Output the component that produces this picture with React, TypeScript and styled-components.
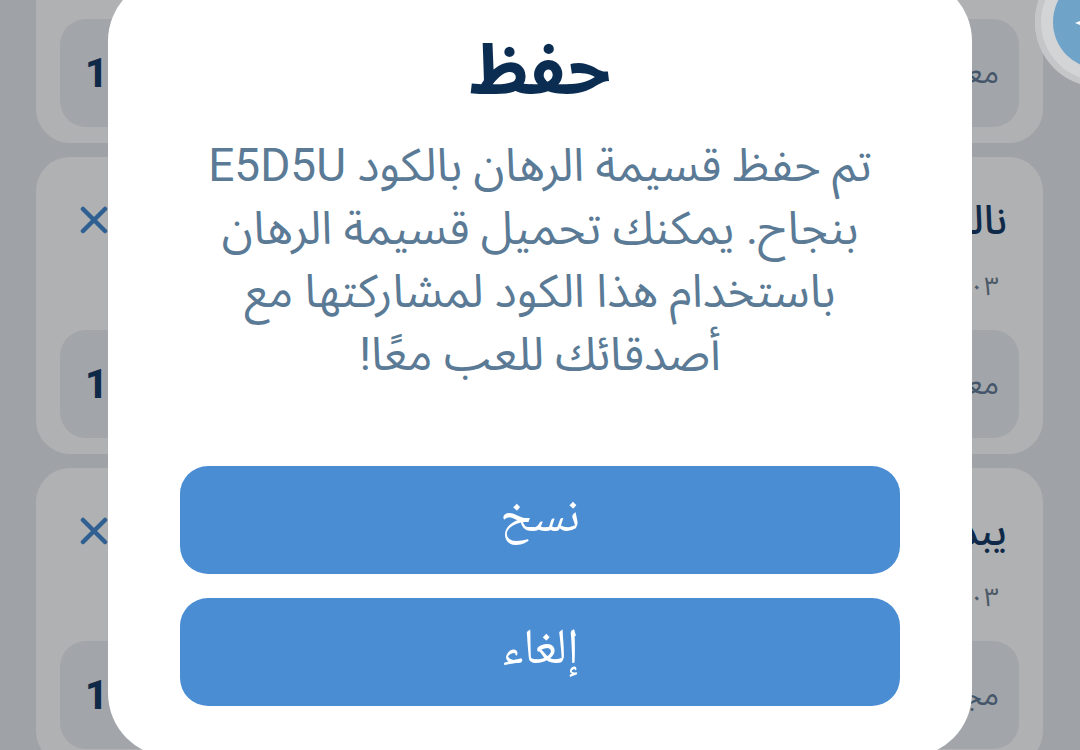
import React from 'react';
import styled, { createGlobalStyle } from 'styled-components';

const GlobalStyle = createGlobalStyle`
  html, body {
    margin: 0;
    padding: 0;
    background: #9fa3a7;
  }
  body {
    font-family: Roboto, 'Noto Sans Arabic', 'DejaVu Sans', sans-serif;
  }
`;

const tickets = [
  { id: 1, title: 'نالت الفوز', date: '٠٣', odds: '1.85', label: 'معامل الربح', showHeader: false },
  { id: 2, title: 'نالت الفوز', date: '٠٣', odds: '1.85', label: 'معامل الربح', showHeader: true },
  { id: 3, title: 'يبدأ قريبا', date: '٠٣', odds: '1.32', label: 'مجموع الربح', showHeader: true },
];

const App = () => {
  return (
    <>
      <GlobalStyle />
      <Screen>
        <List>
          {tickets.map((t) => (
            <Card key={t.id}>
              {t.showHeader ? (
                <CardHeader>
                  <CloseMark viewBox="0 0 28 28" aria-hidden>
                    <path d="M3 3 L25 25 M25 3 L3 25" />
                  </CloseMark>
                  <CardInfo>
                    <CardTitle>{t.title}</CardTitle>
                    <CardDate>{t.date}</CardDate>
                  </CardInfo>
                </CardHeader>
              ) : (
                <Spacer />
              )}
              <OddsBox>
                <Odds>{t.odds}</Odds>
                <OddsLabel>{t.label}</OddsLabel>
              </OddsBox>
            </Card>
          ))}
        </List>

        <Fab>
          <FabInner>
            <svg width="30" height="30" viewBox="0 0 30 30">
              <path d="M4 15 L26 6 L20 15 L26 24 Z" fill="#ffffff" />
            </svg>
          </FabInner>
        </Fab>

        <Modal>
          <Title>حفظ</Title>
          <Message>
            <Line>تم حفظ قسيمة الرهان بالكود E5D5U</Line>
            <Line>بنجاح. يمكنك تحميل قسيمة الرهان</Line>
            <Line>باستخدام هذا الكود لمشاركتها مع</Line>
            <Line>أصدقائك للعب معًا!</Line>
          </Message>
          <Actions>
            <ActionButton>نسخ</ActionButton>
            <ActionButton>إلغاء</ActionButton>
          </Actions>
        </Modal>
      </Screen>
    </>
  );
};

const Screen = styled.div`
  position: relative;
  width: 1080px;
  height: 750px;
  overflow: hidden;
  background: #9fa3a7;
`;

const List = styled.div`
  display: flex;
  flex-direction: column;
  gap: 14px;
  padding: 0 37px 0 36px;
  margin-top: -154px;
`;

const Card = styled.div`
  display: flex;
  flex-direction: column;
  height: 297px;
  box-sizing: border-box;
  padding: 0 24px 16px;
  background: #b0b1b3;
  border-radius: 34px;
`;

const Spacer = styled.div`
  flex: 1;
`;

const CardHeader = styled.div`
  flex: 1;
  display: flex;
  justify-content: space-between;
  align-items: flex-start;
  padding: 44px 12px 0 20px;
`;

const CloseMark = styled.svg`
  width: 28px;
  height: 28px;
  margin-top: 5px;
  path {
    stroke: #305f91;
    stroke-width: 4.5;
    stroke-linecap: round;
    fill: none;
  }
`;

const CardInfo = styled.div`
  direction: rtl;
  display: flex;
  flex-direction: column;
  gap: 18px;
`;

const CardTitle = styled.div`
  font-size: 40px;
  font-weight: 500;
  color: #0f2a48;
  line-height: 40px;
`;

const CardDate = styled.div`
  font-size: 26px;
  color: #4d5a67;
  padding-right: 8px;
`;

const OddsBox = styled.div`
  display: flex;
  justify-content: space-between;
  align-items: center;
  height: 108px;
  padding: 0 20px 0 25px;
  background: #a2a5a9;
  border-radius: 26px;
`;

const Odds = styled.span`
  font-size: 40px;
  font-weight: 800;
  color: #0f2a48;
`;

const OddsLabel = styled.span`
  direction: rtl;
  font-size: 30px;
  color: #45556a;
`;

const Fab = styled.div`
  position: absolute;
  left: 1035px;
  top: -43px;
  width: 130px;
  height: 130px;
  border-radius: 50%;
  background: #d2d4d6;
  box-shadow: inset 0 0 0 6px #c4c6c8;
  display: flex;
  align-items: center;
  justify-content: center;
`;

const FabInner = styled.div`
  width: 94px;
  height: 94px;
  border-radius: 50%;
  background: #6fa3c8;
  display: flex;
  align-items: center;
  padding-left: 18px;
  box-sizing: border-box;
  svg {
    margin-top: 2px;
  }
`;

const Modal = styled.div`
  position: absolute;
  left: 108px;
  top: -23px;
  width: 864px;
  height: 780px;
  box-sizing: border-box;
  padding: 50px 40px 51px;
  background: #ffffff;
  border-radius: 64px;
  display: flex;
  flex-direction: column;
  align-items: center;
  direction: rtl;
`;

const Title = styled.h2`
  margin: 0;
  font-size: 70px;
  font-weight: 700;
  line-height: 86px;
  color: #0b2d52;
`;

const Message = styled.div`
  margin-top: 22px;
  display: flex;
  flex-direction: column;
  align-items: center;
  gap: 2px;
  color: #5a7a95;
`;

const Line = styled.p`
  margin: 0;
  font-size: 46px;
  line-height: 61px;
  text-align: center;
  white-space: nowrap;
`;

const Actions = styled.div`
  margin-top: auto;
  width: 720px;
  display: flex;
  flex-direction: column;
  gap: 24px;
`;

const ActionButton = styled.button`
  height: 108px;
  width: 100%;
  border: none;
  border-radius: 28px;
  background: #4a8dd3;
  color: #ffffff;
  font-family: 'Noto Naskh Arabic', 'DejaVu Sans', sans-serif;
  font-size: 50px;
  cursor: pointer;
`;

export default App;
